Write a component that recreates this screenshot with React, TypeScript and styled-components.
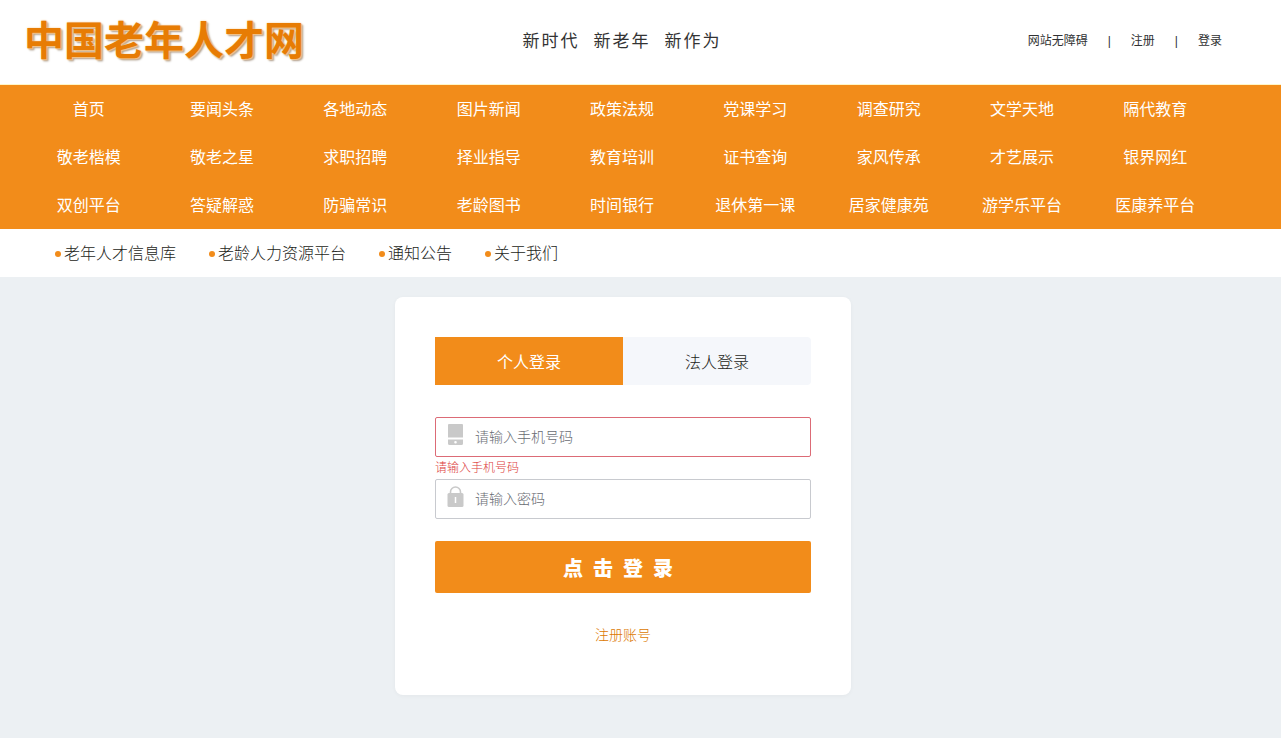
import React, { useState } from 'react';
import styled, { createGlobalStyle } from 'styled-components';

const orange = '#f28c1a';

const GlobalStyle = createGlobalStyle`
  *, *::before, *::after { box-sizing: border-box; }
  body {
    margin: 0;
    color: #1c1d20;
    background: #ecf0f3;
    font-family: "Liberation Sans", "Noto Sans CJK SC", sans-serif;
    font-size: 16px;
    font-weight: 300;
  }
  button, input { font: inherit; }
  a { color: inherit; text-decoration: none; }
`;

const Band = styled.div<{ $tone?: string }>`
  padding: 0 59px 0 22px;
  background: ${(p) => p.$tone ?? '#fff'};
`;

const HeaderRow = styled.header`
  display: grid;
  grid-template-columns: 1fr auto 1fr;
  align-items: center;
  height: 84px;
`;

const HeaderBand = styled(Band)`
  border-bottom: 1px solid #fff6c8;
`;

const Logo = styled.h1`
  margin: 0;
  padding: 0 0 2px 2px;
  font-size: 40px;
  line-height: 48px;
  font-weight: 700;
  white-space: nowrap;
  color: #e77c04;
  text-shadow: 0 0 2px #f8c583, 1px 1px 1px #f3c48c, 2px 2px 2px #a99a8c;
`;

const Slogan = styled.p`
  display: flex;
  gap: 14px;
  margin: 0;
  font-size: 17px;
  font-weight: 400;
  line-height: 24px;
  letter-spacing: 2px;
  color: #333;
  white-space: nowrap;
`;

const UserLinks = styled.div`
  display: flex;
  justify-content: flex-end;
  gap: 20px;
  padding-bottom: 2px;
  font-size: 12px;
  font-weight: 400;
  line-height: 16px;
  white-space: nowrap;
  color: #303133;
`;

const NavGrid = styled.nav`
  display: grid;
  grid-template-columns: repeat(9, 1fr);
`;

const NavLink = styled.a`
  padding-top: 2px;
  line-height: 46px;
  text-align: center;
  white-space: nowrap;
  font-weight: 400;
  color: #fff;
`;

const SubNav = styled.nav`
  display: flex;
  gap: 33px;
  padding-left: 33px;
`;

const SubLink = styled.a`
  display: flex;
  align-items: center;
  gap: 3px;
  padding-top: 2px;
  line-height: 46px;
  white-space: nowrap;

  &::before {
    content: '';
    width: 6px;
    height: 6px;
    border-radius: 50%;
    background: ${orange};
  }
`;

const Main = styled(Band).attrs({ as: 'main' })`
  padding: 20px 58px 40px 23px;
`;

const Card = styled.section`
  width: 100%;
  max-width: 456px;
  margin: 0 auto;
  padding: 40px 40px 48px;
  border-radius: 8px;
  background: #fff;
  box-shadow: 0 1px 4px rgba(0, 0, 0, 0.04);
`;

const Tabs = styled.div`
  display: flex;
  margin-bottom: 32px;
  border-radius: 4px;
  background: #f5f7fb;
`;

const Tab = styled.button<{ $active: boolean }>`
  flex: 1;
  height: 48px;
  padding: 0;
  border: 0;
  border-radius: ${(p) => (p.$active ? '0' : '4px')};
  font-weight: ${(p) => (p.$active ? 400 : 300)};
  color: ${(p) => (p.$active ? '#fff' : '#1c1d20')};
  background: ${(p) => (p.$active ? orange : 'transparent')};
  cursor: pointer;
`;

const Field = styled.label<{ $invalid?: boolean }>`
  display: flex;
  height: 40px;
  padding-left: 11px;
  gap: 10px;
  border: 1px solid ${(p) => (p.$invalid ? '#dc6b76' : '#c8cacf')};
  border-radius: 2px;
  background: #fff;

  svg {
    flex: none;
    margin-top: 6px;
  }
`;

const TextInput = styled.input`
  flex: 1;
  min-width: 0;
  padding: 0;
  border: 0;
  outline: 0;
  background: transparent;
  font-size: 14px;
  color: #303133;

  &::placeholder { color: #686b72; opacity: 1; }
`;

const FieldError = styled.p`
  margin: 0;
  height: 22px;
  font-size: 12px;
  line-height: 22px;
  color: #dc3c3c;
`;

const Submit = styled.button`
  display: block;
  width: 100%;
  height: 52px;
  margin-top: 22px;
  padding: 0;
  border: 0;
  border-radius: 2px;
  font-size: 20px;
  font-weight: 900;
  letter-spacing: 10px;
  color: #fff;
  background: ${orange};
  cursor: pointer;
`;

const Register = styled.a`
  display: block;
  margin-top: 30px;
  font-size: 14px;
  line-height: 24px;
  text-align: center;
  color: #dc7800;
`;

const navItems = [
  '首页', '要闻头条', '各地动态', '图片新闻', '政策法规', '党课学习', '调查研究', '文学天地', '隔代教育',
  '敬老楷模', '敬老之星', '求职招聘', '择业指导', '教育培训', '证书查询', '家风传承', '才艺展示', '银界网红',
  '双创平台', '答疑解惑', '防骗常识', '老龄图书', '时间银行', '退休第一课', '居家健康苑', '游学乐平台', '医康养平台',
];
const subItems = ['老年人才信息库', '老龄人力资源平台', '通知公告', '关于我们'];
const tabs = ['个人登录', '法人登录'];

const PhoneIcon = () => (
  <svg width="18" height="22" viewBox="0 0 18 22" fill="#c9c9c9" aria-hidden="true">
    <path d="M2 0h13a1 1 0 0 1 1 1v12.500H1V1a1 1 0 0 1 1-1z" />
    <path fillRule="evenodd" d="M1 15.500h15v4a1.500 1.500 0 0 1-1.500 1.500h-12A1.500 1.500 0 0 1 1 19.500zM8.500 17a1.300 1.300 0 1 0 0 2.600a1.300 1.300 0 0 0 0-2.600z" />
  </svg>
);

const LockIcon = () => (
  <svg width="18" height="22" viewBox="0 0 18 22" aria-hidden="true">
    <path d="M3.500 9V6a5 5 0 0 1 10 0V9" fill="none" stroke="#c9c9c9" strokeWidth="1.600" />
    <rect x="0.500" y="7" width="16" height="14" rx="1.500" fill="#c9c9c9" />
    <path d="M8.500 11v6" stroke="#fff" strokeWidth="1.500" />
  </svg>
);

export default function App() {
  const [active, setActive] = useState(0);
  return (
    <>
      <GlobalStyle />
      <HeaderBand>
        <HeaderRow>
          <Logo>中国老年人才网</Logo>
          <Slogan>
            <span>新时代</span>
            <span>新老年</span>
            <span>新作为</span>
          </Slogan>
          <UserLinks>
            <a href="#accessible">网站无障碍</a>
            <span>|</span>
            <a href="#register">注册</a>
            <span>|</span>
            <a href="#login">登录</a>
          </UserLinks>
        </HeaderRow>
      </HeaderBand>
      <Band $tone={orange}>
        <NavGrid>
          {navItems.map((item) => (
            <NavLink key={item} href="#nav">{item}</NavLink>
          ))}
        </NavGrid>
      </Band>
      <Band>
        <SubNav>
          {subItems.map((item) => (
            <SubLink key={item} href="#sub">{item}</SubLink>
          ))}
        </SubNav>
      </Band>
      <Main $tone="transparent">
        <Card>
          <Tabs>
            {tabs.map((tab, i) => (
              <Tab key={tab} type="button" $active={i === active} onClick={() => setActive(i)}>
                {tab}
              </Tab>
            ))}
          </Tabs>
          <form onSubmit={(e) => e.preventDefault()}>
            <Field $invalid htmlFor="phone">
              <PhoneIcon />
              <TextInput id="phone" type="tel" placeholder="请输入手机号码" aria-label="手机号码" aria-describedby="phone-error" />
            </Field>
            <FieldError id="phone-error">请输入手机号码</FieldError>
            <Field htmlFor="password">
              <LockIcon />
              <TextInput id="password" type="password" placeholder="请输入密码" aria-label="密码" />
            </Field>
            <Submit type="submit">点击登录</Submit>
          </form>
          <Register href="#register">注册账号</Register>
        </Card>
      </Main>
    </>
  );
}
